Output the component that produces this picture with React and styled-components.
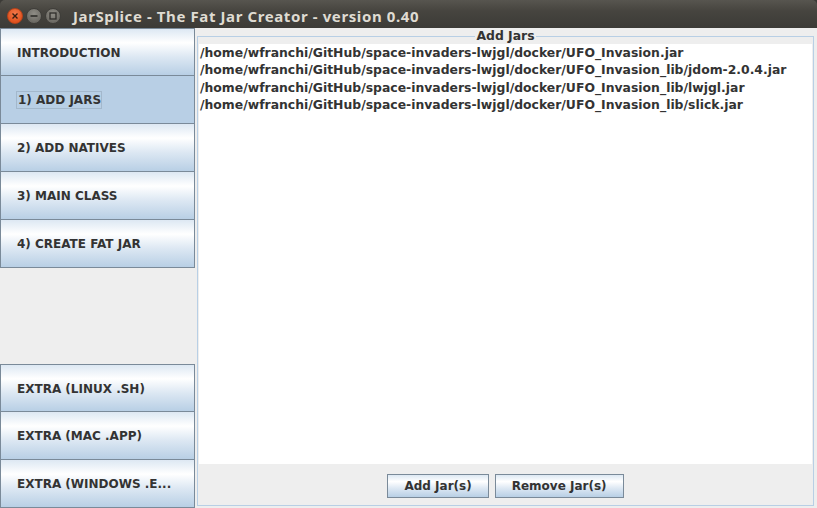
import React from 'react';
import styled, { createGlobalStyle } from 'styled-components';

const GlobalStyle = createGlobalStyle`
	html, body {
		margin: 0;
		padding: 0;
		background: #3c3b37;
	}
`;

const Window = styled.div`
	width: 817px;
	height: 508px;
	display: flex;
	flex-direction: column;
	overflow: hidden;
	font-family: 'DejaVu Sans', sans-serif;
	color: #333333;
`;

const TitleBar = styled.div`
	height: 28px;
	flex: none;
	display: flex;
	align-items: center;
	padding-left: 7px;
	background: linear-gradient(#57554f, #46443f 40%, #3c3b37);
	border-radius: 5px 5px 0 0;
`;

const Controls = styled.div`
	display: flex;
	gap: 3px;
	margin-top: 4px;
`;

const Circle = styled.div`
	width: 16px;
	height: 16px;
	border-radius: 50%;
	display: flex;
	align-items: center;
	justify-content: center;
	box-sizing: border-box;
	border: 1px solid ${p => (p.close ? '#b8431a' : '#3f3e3a')};
	background: ${p =>
		p.close
			? 'radial-gradient(circle at 50% 35%, #f47a4c, #e2531f 70%)'
			: 'radial-gradient(circle at 50% 35%, #8f8d86, #6d6b65 70%)'};
`;

const Title = styled.div`
	margin-left: 12px;
	margin-top: 3px;
	font-family: 'Noto Sans', sans-serif;
	font-weight: bold;
	font-size: 15px;
	color: #dfdbd2;
	letter-spacing: 0.6px;
`;

const Body = styled.div`
	flex: 1;
	display: flex;
	background: #eeeeee;
	min-height: 0;
`;

const Sidebar = styled.div`
	width: 195px;
	flex: none;
	display: flex;
	flex-direction: column;
`;

const Spacer = styled.div`
	flex: 1;
`;

const NavButton = styled.div`
	height: 48px;
	box-sizing: border-box;
	border: 1px solid #7a8a99;
	border-top-width: ${p => (p.first ? '1px' : '0')};
	display: flex;
	align-items: center;
	padding-left: 16px;
	padding-top: 1px;
	font-size: 12px;
	font-weight: bold;
	white-space: nowrap;
	background: ${p =>
		p.active
			? '#b8cfe5'
			: 'linear-gradient(#dde8f3 0%, #ffffff 30%, #dde8f3 60%, #b8cfe5 100%)'};
`;

const Focus = styled.span`
	margin-left: -1px;
	padding: 1px 0 1px 1px;
	border: 1px solid #a3b8cc;
`;

const Panel = styled.div`
	flex: 1;
	display: flex;
	padding: 0 3px 2px 2px;
	min-width: 0;
`;

const Group = styled.fieldset`
	flex: 1;
	margin: 0;
	padding: 0 1px;
	border: 1px solid #b8cfe5;
	display: flex;
	flex-direction: column;
	min-width: 0;
`;

const Legend = styled.legend`
	margin: 0 auto;
	padding: 0 1px;
	font-size: 12.4px;
	font-weight: bold;
	line-height: 16px;
`;

const JarList = styled.div`
	flex: 1;
	background: #ffffff;
	padding: 0 1px;
	display: flex;
	flex-direction: column;
`;

const JarItem = styled.div`
	font-size: 12.4px;
	font-weight: bold;
	line-height: 17.3px;
	white-space: nowrap;
`;

const ButtonRow = styled.div`
	flex: none;
	display: flex;
	justify-content: center;
	gap: 6px;
	padding: 10px 0 7px;
`;

const PushButton = styled.button`
	height: 24px;
	box-sizing: border-box;
	border: 1px solid #7a8a99;
	padding: 0 16px;
	font-family: 'DejaVu Sans', sans-serif;
	font-size: 12px;
	font-weight: bold;
	color: #333333;
	background: linear-gradient(#dde8f3 0%, #ffffff 30%, #dde8f3 60%, #b8cfe5 100%);
`;

const navTop = ['INTRODUCTION', '1) ADD JARS', '2) ADD NATIVES', '3) MAIN CLASS', '4) CREATE FAT JAR'];
const navBottom = ['EXTRA (LINUX .SH)', 'EXTRA (MAC .APP)', 'EXTRA (WINDOWS .E...'];

const jars = [
	'/home/wfranchi/GitHub/space-invaders-lwjgl/docker/UFO_Invasion.jar',
	'/home/wfranchi/GitHub/space-invaders-lwjgl/docker/UFO_Invasion_lib/jdom-2.0.4.jar',
	'/home/wfranchi/GitHub/space-invaders-lwjgl/docker/UFO_Invasion_lib/lwjgl.jar',
	'/home/wfranchi/GitHub/space-invaders-lwjgl/docker/UFO_Invasion_lib/slick.jar'
];

const App = () => (
	<Window>
		<GlobalStyle />
		<TitleBar>
			<Controls>
				<Circle close>
					<svg width="8" height="8" viewBox="0 0 8 8">
						<path d="M1.5 1.5 L6.5 6.5 M6.5 1.5 L1.5 6.5" stroke="#3a1d10" strokeWidth="1.4" />
					</svg>
				</Circle>
				<Circle>
					<svg width="8" height="8" viewBox="0 0 8 8">
						<path d="M0.5 4 L7.5 4" stroke="#2e2d2a" strokeWidth="1.6" />
					</svg>
				</Circle>
				<Circle>
					<svg width="8" height="8" viewBox="0 0 8 8">
						<rect x="1" y="1" width="6" height="6" fill="none" stroke="#2e2d2a" strokeWidth="1.3" />
					</svg>
				</Circle>
			</Controls>
			<Title>JarSplice - The Fat Jar Creator - version 0.40</Title>
		</TitleBar>
		<Body>
			<Sidebar>
				{navTop.map((label, i) => (
					<NavButton key={label} first={i === 0} active={i === 1}>
						{i === 1 ? <Focus>{label}</Focus> : label}
					</NavButton>
				))}
				<Spacer />
				{navBottom.map((label, i) => (
					<NavButton key={label} first={i === 0}>
						{label}
					</NavButton>
				))}
			</Sidebar>
			<Panel>
				<Group>
					<Legend>Add Jars</Legend>
					<JarList>
						{jars.map(jar => (
							<JarItem key={jar}>{jar}</JarItem>
						))}
					</JarList>
					<ButtonRow>
						<PushButton>Add Jar(s)</PushButton>
						<PushButton>Remove Jar(s)</PushButton>
					</ButtonRow>
				</Group>
			</Panel>
		</Body>
	</Window>
);

export default App;
